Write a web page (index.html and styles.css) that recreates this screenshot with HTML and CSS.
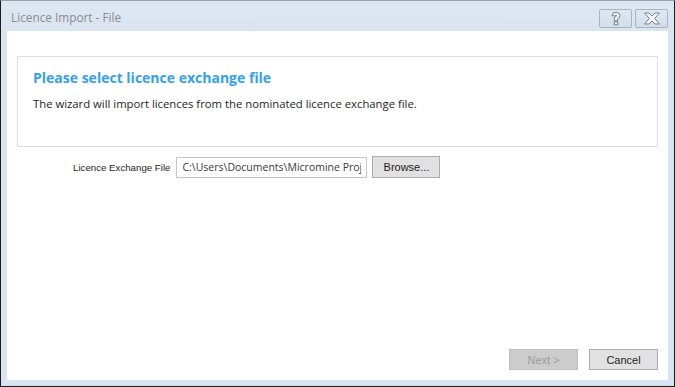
FILE: index.html
```html
<!DOCTYPE html>
<html lang="en">
<head>
    <meta charset="UTF-8">
    <title>Licence Import - File</title>
    <link rel="stylesheet" href="styles.css">
</head>
<body>
    <div class="window">
        <div class="title-bar">
            <span class="title">Licence Import - File</span>
            <div class="caption-buttons">
                <div class="caption-btn">
                    <svg width="14" height="15" viewBox="0 0 14 15">
                        <path d="M3 4.8 Q3 1.2 7 1.2 Q11 1.2 11 4.6 Q11 6.8 8.7 7.6 L8.7 9.6 L5.3 9.6 L5.3 6.4 Q7.6 5.9 7.6 4.7 Q7.6 4 7 4 Q6.4 4 6.4 4.8 Z" fill="#f4f6f8" stroke="#78838f" stroke-width="1"/>
                        <rect x="5.3" y="10.8" width="3.4" height="3" fill="#f4f6f8" stroke="#78838f" stroke-width="1"/>
                    </svg>
                </div>
                <div class="caption-btn">
                    <svg width="18" height="13" viewBox="0 0 18 13">
                        <path d="M1.5 1 L6 1 L9 4 L12 1 L16.5 1 L11.7 6.5 L16.5 12 L12 12 L9 9 L6 12 L1.5 12 L6.3 6.5 Z" fill="#f4f6f8" stroke="#78838f" stroke-width="1"/>
                    </svg>
                </div>
            </div>
        </div>
        <div class="client">
            <div class="intro-panel">
                <h2>Please select licence exchange file</h2>
                <p>The wizard will import licences from the nominated licence exchange file.</p>
            </div>
            <div class="file-row">
                <label for="file-path">Licence Exchange File</label>
                <input id="file-path" type="text" value="C:\Users\Documents\Micromine Projects\licences.lic">
                <button class="btn">Browse...</button>
            </div>
            <div class="spacer"></div>
            <div class="footer">
                <button class="btn btn-wide" disabled>Next &gt;</button>
                <button class="btn btn-wide">Cancel</button>
            </div>
        </div>
    </div>
</body>
</html>
```

FILE: styles.css
```css
body {
    margin: 0;
    background: #ffffff;
}

.window {
    width: 675px;
    height: 387px;
    box-sizing: border-box;
    border: 1px solid #1c1c1c;
    border-top-color: #9aa4ae;
    background: linear-gradient(#dee7f1, #d8e4f1 40px);
    display: flex;
    flex-direction: column;
    padding: 0 6px 6px 6px;
}

.title-bar {
    height: 30px;
    display: flex;
    align-items: flex-start;
    justify-content: space-between;
}

.title {
    font-family: "Open Sans", sans-serif;
    font-size: 11.8px;
    color: #8c8c8c;
    padding-left: 4px;
    margin-top: 8px;
}

.caption-buttons {
    display: flex;
    gap: 3px;
    margin-top: 8px;
}

.caption-btn {
    width: 33px;
    height: 19px;
    box-sizing: border-box;
    border: 1px solid #a7b4c3;
    border-radius: 2px;
    background: linear-gradient(#dfe8f2, #d3deea);
    display: flex;
    align-items: center;
    justify-content: center;
}

.client {
    flex: 1;
    background: #ffffff;
    display: flex;
    flex-direction: column;
    padding: 25px 10px 10px 10px;
    font-family: "Open Sans", sans-serif;
}

.intro-panel {
    border: 1px solid #dcdcdc;
    height: 91px;
    box-sizing: border-box;
    padding: 11px 15px;
}

.intro-panel h2 {
    margin: 0;
    font-size: 14px;
    font-weight: bold;
    color: #34a0f4;
}

.intro-panel p {
    margin: 9px 0 0 0;
    font-size: 11.3px;
    color: #1e1e1e;
}

.file-row {
    display: flex;
    align-items: center;
    margin-top: 9px;
    padding-left: 56px;
}

.file-row label {
    color: #1e1e1e;
    margin-right: 6px;
    font-family: "Liberation Sans", sans-serif;
    font-size: 9.7px;
}

.file-row input {
    width: 191px;
    height: 21px;
    box-sizing: border-box;
    border: 1px solid #c5c5c5;
    padding: 0 5px;
    font-family: "Open Sans", sans-serif;
    font-size: 10.5px;
    color: #3a3a3a;
    margin-right: 5px;
}

.btn {
    height: 22px;
    width: 68px;
    box-sizing: border-box;
    border: 1px solid #adadad;
    background: #e1e1e1;
    font-family: "Liberation Sans", sans-serif;
    font-size: 11px;
    color: #1e1e1e;
    padding: 0;
}

.btn:disabled {
    background: #cccccc;
    border-color: #bfbfbf;
    color: #9a9a9a;
}

.spacer {
    flex: 1;
}

.footer {
    display: flex;
    justify-content: flex-end;
    gap: 11px;
}

.btn-wide {
    width: 69px;
    height: 21px;
}
```
